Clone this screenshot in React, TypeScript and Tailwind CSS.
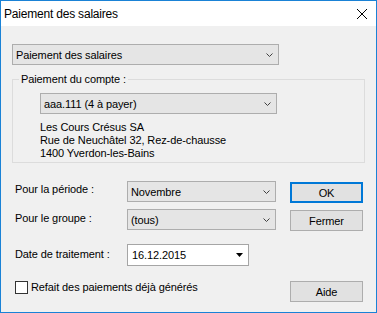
import React from 'react';

const font = { fontFamily: '"Liberation Sans", Arial, sans-serif' };

const Chevron: React.FC = () => (
  <svg width="7" height="4" viewBox="0 0 7 4" className="shrink-0">
    <polyline points="0.5,0.5 3.5,3.5 6.5,0.5" fill="none" stroke="#404040" strokeWidth="1" />
  </svg>
);

const Combo: React.FC<{ value: string; width: string }> = ({ value, width }) => (
  <div className={`${width} h-[21px] border border-[#adadad] bg-[#e5e5e5] flex items-center justify-between pl-[3px] pr-[5px]`}>
    <span className="leading-[14px]">{value}</span>
    <Chevron />
  </div>
);

const Button: React.FC<{ label: string; primary?: boolean }> = ({ label, primary }) => (
  <div
    className={`w-[73px] h-[21px] mt-[1px] bg-[#e1e1e1] flex items-center justify-center leading-[14px] ${
      primary ? 'border-2 border-[#0078d7]' : 'border border-[#adadad]'
    }`}
  >
    {label}
  </div>
);

export default function App() {
  return (
    <div
      className="w-[377px] h-[313px] border border-[#1a82d6] bg-[#f0f0f0] flex flex-col text-[11px] tracking-[-0.1px] text-black"
      style={font}
    >
      {/* Title bar */}
      <div className="h-[25px] bg-white flex items-center justify-between pl-[3px] pr-[9px]">
        <span className="text-[12px] tracking-[-0.2px] leading-[14px]">Paiement des salaires</span>
        <svg width="10" height="10" viewBox="0 0 10 10">
          <line x1="0" y1="0" x2="10" y2="10" stroke="#000" strokeWidth="1" />
          <line x1="10" y1="0" x2="0" y2="10" stroke="#000" strokeWidth="1" />
        </svg>
      </div>

      <div className="pl-[11px] flex flex-col">
        <div className="mt-[18px]">
          <Combo value="Paiement des salaires" width="w-[267px]" />
        </div>

        <fieldset className="mt-[7px] w-[353px] border border-[#dcdcdc] pl-[6px] pb-[2px]">
          <legend className="px-[2px] leading-[14px]">Paiement du compte :</legend>
          <div className="ml-[21px] mt-[7px]">
            <Combo value="aaa.111 (4 à payer)" width="w-[237px]" />
          </div>
          <div className="ml-[21px] mt-[7px] leading-[13px]">
            <div>Les Cours Crésus SA</div>
            <div>Rue de Neuchâtel 32, Rez-de-chausse</div>
            <div>1400 Yverdon-les-Bains</div>
          </div>
        </fieldset>

        <div className="w-[351px] mt-[18px] flex items-start">
          <span className="ml-[3px] w-[112px] mt-[1px] leading-[14px]">Pour la période :</span>
          <Combo value="Novembre" width="w-[149px]" />
          <div className="ml-auto">
            <Button label="OK" primary />
          </div>
        </div>

        <div className="w-[351px] mt-[6px] flex items-start">
          <span className="ml-[3px] w-[112px] mt-[2px] leading-[14px]">Pour le groupe :</span>
          <Combo value="(tous)" width="w-[149px]" />
          <div className="ml-auto">
            <Button label="Fermer" />
          </div>
        </div>

        <div className="w-[351px] mt-[13px] flex items-start">
          <span className="ml-[3px] w-[112px] mt-[3px] leading-[14px]">Date de traitement :</span>
          <div className="w-[122px] h-[22px] border border-[#a5a5a5] bg-white flex items-center justify-between pl-[4px] pr-[5px]">
            <span className="leading-[14px]">16.12.2015</span>
            <svg width="7" height="4" viewBox="0 0 7 4">
              <polygon points="0,0 7,0 3.5,4" fill="#000" />
            </svg>
          </div>
        </div>

        <div className="w-[351px] mt-[14px] flex items-start">
          <div className="ml-[3px] flex items-center">
            <div className="w-[13px] h-[13px] border border-[#333333] bg-white" />
            <span className="ml-[3px] leading-[14px]">Refait des paiements déjà générés</span>
          </div>
          <div className="ml-auto">
            <Button label="Aide" />
          </div>
        </div>
      </div>
    </div>
  );
}
